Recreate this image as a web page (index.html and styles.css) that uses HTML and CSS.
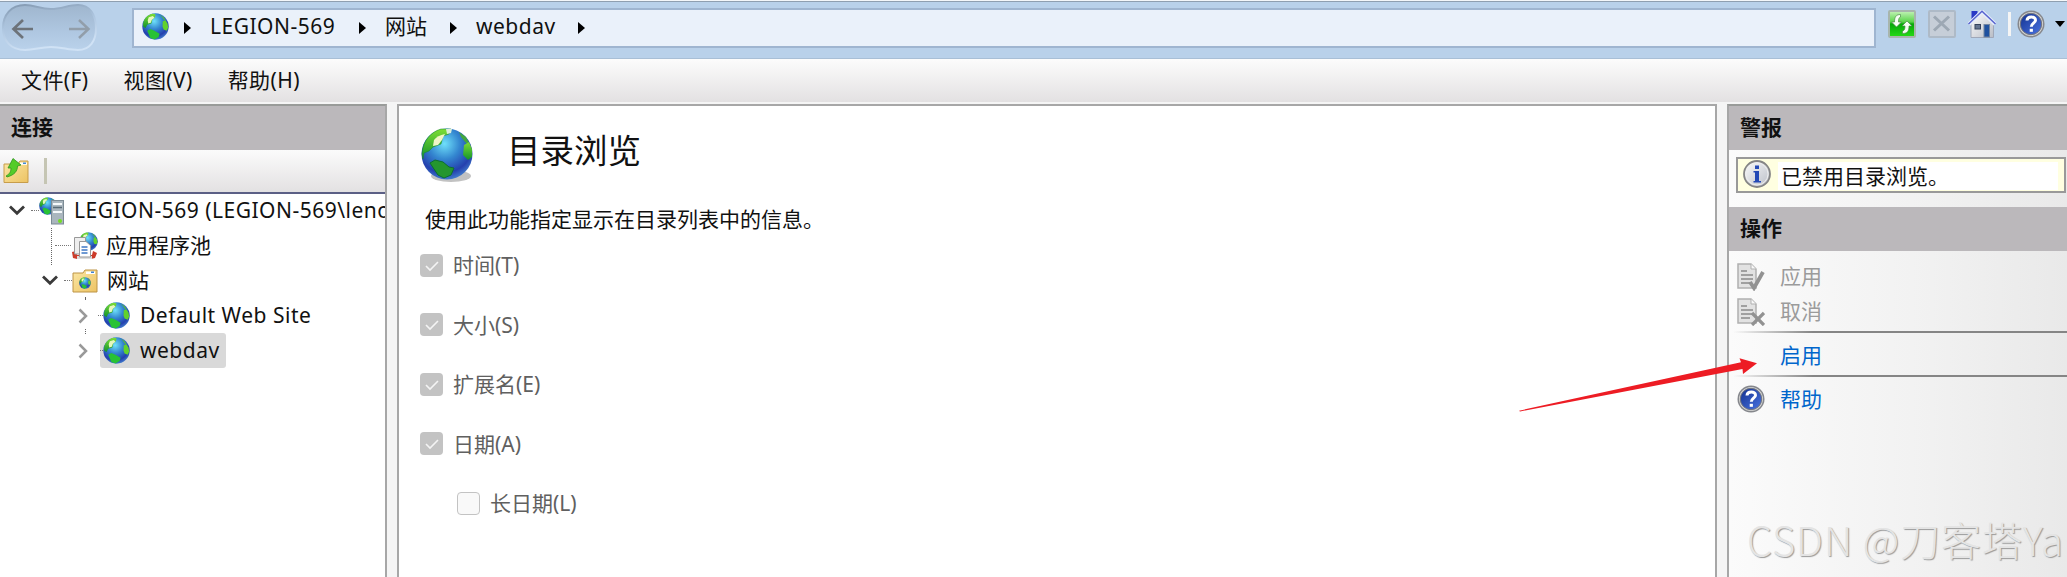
FILE: index.html
```html
<!doctype html>
<html lang="zh-CN">
<head>
<meta charset="utf-8">
<title>IIS 管理器</title>
	<link rel="stylesheet" href="styles.css">
</head>

<body>
	<!-- shared icons -->
	<svg class="defs" width="0" height="0">
		<defs>
			<radialGradient id="sea" cx="45%" cy="30%" r="75%">
				<stop offset="0" stop-color="#6fe0fa"/>
				<stop offset=".4" stop-color="#3487d0"/>
				<stop offset=".75" stop-color="#2440ae"/>
				<stop offset="1" stop-color="#4b8fd6"/>
			</radialGradient>
			<linearGradient id="land" x1="0" y1="0" x2="0" y2="1">
				<stop offset="0" stop-color="#7ddd35"/>
				<stop offset="1" stop-color="#12932c"/>
			</linearGradient>
			<linearGradient id="folder" x1="0" y1="0" x2="1" y2="1">
				<stop offset="0" stop-color="#fbe7a5"/>
				<stop offset="1" stop-color="#edc363"/>
			</linearGradient>
			<linearGradient id="green" x1="0" y1="0" x2="0" y2="1">
				<stop offset="0" stop-color="#c4f3b8"/>
				<stop offset=".42" stop-color="#5ad44a"/>
				<stop offset=".5" stop-color="#07a80a"/>
				<stop offset="1" stop-color="#25dc16"/>
			</linearGradient>
			<linearGradient id="steel" x1="0" y1="0" x2="1" y2="1">
				<stop offset="0" stop-color="#fdfdfd"/>
				<stop offset="1" stop-color="#b9bdc6"/>
			</linearGradient>
			<linearGradient id="blue" x1="0" y1="0" x2="1" y2="1">
				<stop offset="0" stop-color="#13318f"/>
				<stop offset="1" stop-color="#4a74e2"/>
			</linearGradient>
			<linearGradient id="pill" x1="0" y1="0" x2="0" y2="1">
				<stop offset="0" stop-color="#9fb6ce"/>
				<stop offset=".6" stop-color="#afc7e1"/>
				<stop offset="1" stop-color="#bad2eb"/>
			</linearGradient>
			<linearGradient id="rim" x1="0" y1="0" x2=".3" y2="1">
				<stop offset="0" stop-color="#8298b0"/>
				<stop offset=".5" stop-color="#aec6e0"/>
				<stop offset="1" stop-color="#d0e2f5"/>
			</linearGradient>
		</defs>
		<symbol id="globe" viewBox="0 0 26 26">
			<circle cx="13" cy="13" r="12.7" fill="url(#sea)"/>
			<path d="M1 12C1 6 5 2 10 .8l3 .3-.5 3-2.500 2-1 4-4 1.300-1.500 3-2-1z" fill="url(#land)"/>
			<path d="M6.500 4l4-1 1.500 1.500-2.500 2-1 3-2.500.5-.5-3z" fill="#e6f7bd"/>
			<path d="M17 1.500l4 2.500 2 3.500-2-1-1.500-2.500z" fill="#58bb3a"/>
			<path d="M20 8l2.500-1 2 3 .8 4-1.500 3-3-1-1-3z" fill="#62d22c"/>
			<path d="M5 17l3-1.500 4 1.500 5 3-1 3-4 2.500-4-1.500z" fill="#28c235"/>
		</symbol>
		<symbol id="help-icon" viewBox="0 0 28 28">
			<circle cx="14" cy="14" r="13.500" fill="#85878c"/>
			<circle cx="14" cy="14" r="12" fill="#d5d5d3"/>
			<circle cx="14" cy="14" r="10.700" fill="url(#blue)" stroke="#72757e"/>
			<path d="M10 10.500c.3-4.500 8.500-4.700 8.500-.3 0 3-4.200 3-4.200 6.600" fill="none" stroke="#fff" stroke-width="3"/>
			<rect x="12.700" y="18.800" width="3.200" height="3" fill="#fff"/>
		</symbol>
		<symbol id="sheet" viewBox="0 0 28 28">
			<path d="M1 1h13l5 5v19H1z" fill="#e2e2e2" stroke="#b0b0b0" stroke-width="1.500"/>
			<path d="M14 1v5h5" fill="#f8f8f8" stroke="#b0b0b0"/>
			<path d="M4 8h6M4 12h12M4 16h12M4 20h9" stroke="#8b8b8b" stroke-width="1.500"/>
		</symbol>
		<symbol id="tick" viewBox="0 0 23 23">
			<path d="M6 12l4 4 8-8" fill="none" stroke="#f4f4f4" stroke-width="1.600"/>
		</symbol>
		<symbol id="chev-down" viewBox="0 0 16 11">
			<path d="M1 1.500l7 6.800 7-6.800" fill="none" stroke="#3a3a3a" stroke-width="2.800"/>
		</symbol>
		<symbol id="chev-right" viewBox="0 0 10 16">
			<path d="M1.500 1.500L8 8l-6.500 6.500" fill="none" stroke="#999" stroke-width="2.500"/>
		</symbol>
	</svg>

	<div class="topbar">
		<svg class="nav" width="96" height="50" viewBox="0 0 96 50">
			<path d="M23 2C33 2 38 6 49 6S66 2 76 2c12 0 18 10 18 23s-6 22-18 22c-10 0-16-3-27-3s-16 3-26 3C9 47 1 38 1 25S9 2 23 2z" fill="url(#pill)" stroke="url(#rim)" stroke-width="2"/>
			<path d="M31 26H12M21 17l-9.500 9 9.500 9" fill="none" stroke="#6d737a" stroke-width="2.700"/>
			<path d="M67 26h19M77 17l9.500 9-9.500 9" fill="none" stroke="#929eaa" stroke-width="2.500"/>
		</svg>
		<div class="address">
			<svg class="globe" width="27" height="27"><use href="#globe"/></svg>
			<i class="arrow"></i>
			<span class="wide crumb-host">LEGION-569</span>
			<i class="arrow"></i>
			<span class="crumb-sites">网站</span>
			<i class="arrow"></i>
			<span class="wide crumb-site">webdav</span>
			<i class="arrow"></i>
		</div>
		<div class="tools">
			<svg width="28" height="28" viewBox="0 0 28 28">
				<rect x="1" y="1" width="26" height="26" rx="1" fill="url(#green)" stroke="#a7b5ac" stroke-width="2"/>
				<path d="M12.500 4.500C8 4.500 6.500 7 6.500 12H3.500l5 5 5-5H10.500c0-3 .5-4.500 2-5z" fill="#f6fff4" stroke="#4c8c48" stroke-width=".7"/>
				<path d="M14.500 23.500c5 0 6.500-2.500 6.500-7.500h3l-5-5-5 5h3c0 3-.5 4.500-2.500 5z" fill="#f6fff4" stroke="#4c8c48" stroke-width=".7"/>
			</svg>
			<svg width="28" height="28" viewBox="0 0 28 28">
				<rect x="1" y="1" width="26" height="26" rx="1" fill="#c6ced8" stroke="#aebac7" stroke-width="2"/>
				<path d="M6 6.500l15 14M21 6.500l-15 14" stroke="#9da8b4" stroke-width="3"/>
			</svg>
			<svg width="28" height="28" viewBox="0 0 28 28">
				<path d="M3.500 1h6v7l-6 4z" fill="#2938c5"/>
				<path d="M3 14L14 3l11.500 11v13.500H3z" fill="url(#steel)" stroke="#a0a8b9"/>
				<path d="M1 14L14 1.500 27 14" fill="none" stroke="#e5ecfb" stroke-width="4"/>
				<path d="M.5 14L14 1.300 27.500 14" fill="none" stroke="#5864cf" stroke-width="1.500"/>
				<rect x="7" y="14.500" width="5.500" height="4.500" fill="#64748f" stroke="#35425c"/>
				<rect x="16" y="14.500" width="5.500" height="12.500" fill="#1f519f" stroke="#73859f"/>
			</svg>
			<i class="divider"></i>
			<svg width="28" height="28"><use href="#help-icon"/></svg>
			<i class="caret"></i>
		</div>
	</div>

	<div class="menubar">
		<span>文件(F)</span>
		<span>视图(V)</span>
		<span>帮助(H)</span>
	</div>

	<div class="main">
		<div class="connections">
			<div class="panel-title">连接</div>
			<div class="toolbar">
				<svg width="26" height="26" viewBox="0 0 26 26">
					<path d="M1 6h14l2-3h8v21.500H1z" fill="url(#folder)" stroke="#c79d4b"/>
					<path d="M17 4.500h7v2.300h-7z" fill="#fff"/>
					<path d="M20 4.500h3v1.500h-3z" fill="#448bd7"/>
					<path d="M3 18c4-2 5-5 5-8H5l5-9.500 8 6.500-3.500 1c0 5-3 9-10.500 11z" fill="#55cc29" stroke="#309620" stroke-width=".8"/>
				</svg>
				<i class="divider"></i>
			</div>
			<div class="tree">
				<i class="line line-a"></i>
				<i class="line line-b"></i>
				<i class="line line-c"></i>
				<div class="node">
					<span class="twist"><svg width="16" height="11"><use href="#chev-down"/></svg></span>
					<i class="dots"></i>
					<svg class="icon" width="27" height="28" viewBox="0 0 27 28">
						<svg x="0" y="0" width="18" height="18"><use href="#globe"/></svg>
						<rect x="12.500" y="3.500" width="12" height="23.500" fill="#aab6be" stroke="#7c8b95"/>
						<path d="M14 7h9M14 15h9" stroke="#f5f8fa" stroke-width="2"/>
						<path d="M14 10.500h9" stroke="#596b76" stroke-width="1.500"/>
						<circle cx="21" cy="24" r="2" fill="#73df22"/>
					</svg>
					<span class="label wide">LEGION-569 (LEGION-569\lenovo)</span>
				</div>
				<div class="node level-1">
					<span class="twist"></span>
					<i class="dots"></i>
					<svg class="icon" width="27" height="28" viewBox="0 0 27 28">
						<svg x="8" y="0" width="19" height="19"><use href="#globe"/></svg>
						<path d="M1 20l4-1 1 4h15l1-4 4 2-2 5-4 1H6l-4-1z" fill="#cc3c2b"/>
						<path d="M6 24h15v3H6z" fill="#ddd"/>
						<path d="M3.500 5.500h11V22h-11z" fill="#eee" stroke="#999"/>
						<path d="M8.500 9.500H15l4.500 4V25h-11z" fill="#fff" stroke="#999"/>
						<path d="M10.500 15h6M10.500 18h6M10.500 21h6" stroke="#3f78c5" stroke-width="1.500"/>
					</svg>
					<span class="label">应用程序池</span>
				</div>
				<div class="node level-1">
					<span class="twist"><svg width="16" height="11"><use href="#chev-down"/></svg></span>
					<i class="dots"></i>
					<svg class="icon" width="27" height="28" viewBox="0 0 27 28">
						<path d="M1 6h10l2-3h12v22H1z" fill="url(#folder)" stroke="#bd9447"/>
						<path d="M14 4.500h9v2.500h-9z" fill="#fff"/>
						<path d="M19 4.500h3v1.500h-3z" fill="#3f83d1"/>
						<svg x="7" y="10" width="12" height="12"><use href="#globe"/></svg>
					</svg>
					<span class="label">网站</span>
				</div>
				<div class="node level-2">
					<span class="twist"><svg width="10" height="16"><use href="#chev-right"/></svg></span>
					<i class="dots"></i>
					<svg class="icon" width="27" height="27"><use href="#globe"/></svg>
					<span class="label wide">Default Web Site</span>
				</div>
				<div class="node level-2">
					<span class="twist"><svg width="10" height="16"><use href="#chev-right"/></svg></span>
					<div class="selected">
						<i class="dots"></i>
						<svg class="icon" width="27" height="27"><use href="#globe"/></svg>
						<span class="label wide">webdav</span>
					</div>
				</div>
			</div>
		</div>

		<div class="content">
			<div class="heading">
				<svg width="53" height="56" viewBox="0 0 53 56">
					<ellipse cx="30" cy="48" rx="20" ry="6" fill="#777" opacity=".45"/>
					<circle cx="26" cy="26" r="25.500" fill="url(#sea)"/>
					<path d="M1 26C2 12 10 4 20 1l10 0-2 5-6 2-2 8-8 3-4 4-5 2-1 6z" fill="url(#land)" stroke="#16862b" stroke-width=".5"/>
					<path d="M13 12c2-3 6-5 11-6l-3 6-4 5-5 1z" fill="#f0f5c7"/>
					<path d="M25 1h6l-1 4-4 1z" fill="#dceddc"/>
					<path d="M38 4l7 5 4 8-4-2-5-6z" fill="#43a63e"/>
					<path d="M43 17l5-3 3 7v8l-4 3-5-5z" fill="url(#land)"/>
					<path d="M9 35l5-3 8 2 6 5 5 1-3 7-7 3-6-3z" fill="#24962e" stroke="#0c6f30"/>
				</svg>
				<h1>目录浏览</h1>
			</div>
			<p class="desc">使用此功能指定显示在目录列表中的信息。</p>
			<div class="option"><span class="box checked"><svg width="23" height="23"><use href="#tick"/></svg></span>时间(T)</div>
			<div class="option"><span class="box checked"><svg width="23" height="23"><use href="#tick"/></svg></span>大小(S)</div>
			<div class="option"><span class="box checked"><svg width="23" height="23"><use href="#tick"/></svg></span>扩展名(E)</div>
			<div class="option"><span class="box checked"><svg width="23" height="23"><use href="#tick"/></svg></span>日期(A)</div>
			<div class="option sub"><span class="box"></span>长日期(L)</div>
		</div>

		<div class="actions">
			<div class="panel-title">警报</div>
			<div class="alert">
				<svg width="28" height="28" viewBox="0 0 28 28">
					<circle cx="14" cy="14" r="13" fill="url(#steel)" stroke="#858585" stroke-width="1.800"/>
					<circle cx="14" cy="14" r="11" fill="none" stroke="#eee"/>
					<path d="M12 5.500h4v3.500h-4zM10.500 11H16v10h2v1.500h-7.500V21H12v-8.500h-1.500z" fill="#2349b5"/>
				</svg>
				<span>已禁用目录浏览。</span>
			</div>
			<div class="panel-title second">操作</div>
			<div class="action disabled">
				<svg width="28" height="28" viewBox="0 0 28 28"><use href="#sheet"/><path d="M13 19l4 6L26 9" fill="none" stroke="#929292" stroke-width="3.800"/></svg>
				<span>应用</span>
			</div>
			<div class="action disabled">
				<svg width="28" height="28" viewBox="0 0 28 28"><use href="#sheet"/><path d="M15 15l12 12M27 15L15 27" fill="none" stroke="#929292" stroke-width="3.300"/></svg>
				<span>取消</span>
			</div>
			<div class="rule"></div>
			<div class="action enable"><span>启用</span></div>
			<div class="rule"></div>
			<div class="action help">
				<svg width="28" height="28"><use href="#help-icon"/></svg>
				<span>帮助</span>
			</div>
		</div>
	</div>

	<svg class="pointer" width="240" height="54" viewBox="0 0 240 54">
		<path d="M0 52.700L222 4.300 220.500.3 238 5.300 224 16 223.500 11 1 53.500z" fill="#ed1c24"/>
	</svg>
	<div class="watermark">CSDN @刀客塔Ya</div>
</body>
</html>
```

FILE: styles.css
```css
*{box-sizing: border-box;}
body{
	margin: 0;
	width: 2067px;
	height: 577px;
	overflow: hidden;
	position: relative;
	background-color: #f5f5f5;
	color: #111;
	font-family: "Noto Sans","Noto Sans CJK SC",sans-serif;
	font-size: 21px;
	line-height: 30px;
	white-space: nowrap;
}
svg{
	display: block;
	flex-shrink: 0;
}
i{
	display: block;
	flex-shrink: 0;
}
.defs{
	position: absolute;
}
.wide{
	letter-spacing: 0.5px;
}

/* top bar */
.topbar{
	height: 59px;
	display: flex;
	align-items: flex-start;
	background-color: #b9d1ea;
	border-top: 1px solid #f4f7fa;
	border-bottom: 1px solid #a9bfd6;
	box-shadow: inset 0 1px #8f9fb0;
}
.nav{
	margin: 2px 0 0 2px;
}
.address{
	width: 1744px;
	height: 40px;
	margin: 7px 0 0 34px;
	padding-left: 8px;
	display: flex;
	align-items: center;
	background-color: #eaf1fa;
	border: 2px solid #9fb5d0;
}
.globe{
	margin-top: -3px;
}
.arrow{
	width: 7px;
	height: 12px;
	margin-left: 15px;
	background-color: #000;
	clip-path: polygon(0 0,100% 50%,0 100%);
}
.address span{
	margin: -4px 0 0 19px;
}
.crumb-host{
	width: 134px;
}
.crumb-sites{
	width: 50px;
}
.crumb-site{
	width: 87px;
}
.tools{
	display: flex;
	align-items: center;
	gap: 12px;
	margin: 9px 0 0 12px;
}
.tools .divider{
	width: 3px;
	height: 24px;
	background-color: #f5f5f5;
}
.tools .divider + svg{
	margin-left: -6px;
}
.caret{
	width: 10px;
	height: 6px;
	margin-left: -2px;
	background-color: #000;
	clip-path: polygon(0 0,100% 0,50% 100%);
}

/* menu */
.menubar{
	height: 43px;
	padding: 6px 0 0 21px;
	display: flex;
	gap: 35px;
	letter-spacing: 0.4px;
	background-image: linear-gradient(#fcfcfc,#e3e1e2);
}

/* panels */
.main{
	display: flex;
	height: 475px;
	padding-top: 2px;
	background-color: #f5f5f5;
}
.panel-title{
	height: 44px;
	padding: 6px 0 0 11px;
	background-color: #bbb8bb;
	font-weight: bold;
}
.connections{
	width: 387px;
	border-top: 2px solid #999b99;
	border-right: 2px solid #a7a7a7;
	background-color: #fff;
}
.toolbar{
	height: 44px;
	padding: 8px 0 0 3px;
	display: flex;
	gap: 15px;
	border-bottom: 2px solid #5b5f85;
	background-image: linear-gradient(#fbfbfb,#e3e1e2);
}
.toolbar .divider{
	width: 3px;
	height: 26px;
	background-color: #c5c5b3;
}
.tree{
	position: relative;
	overflow: hidden;
	height: 380px;
	margin-top: -1px;
}
.node{
	height: 35px;
	padding-left: 9px;
	display: flex;
	align-items: center;
}
.level-1{
	padding-left: 42px;
}
.level-2{
	padding-left: 78px;
}
.twist{
	width: 22px;
	flex-shrink: 0;
}
.level-2 .twist{
	width: 20px;
}
.dots{
	width: 8px;
	border-top: 1px dotted #777;
}
.level-2 .dots{
	width: 5px;
}
.label{
	margin: -2px 0 0 8px;
}
.level-2 .label{
	margin-left: 10px;
}
.selected{
	width: 126px;
	height: 35px;
	margin-left: 2px;
	display: flex;
	align-items: center;
	background-color: #d9d9d9;
	border-radius: 3px;
}
.selected .dots{
	width: 3px;
}
.line{
	position: absolute;
	border-left: 1px dotted #666;
}
.line-a{
	left: 51px;
	top: 35px;
	height: 37px;
}
.line + .line-b{
	left: 85px;
	top: 104px;
	height: 2px;
}
.line-c{
	left: 85px;
	top: 136px;
	height: 5px;
}
.level-1 .twist:empty{
	width: 13px;
}
.level-1 .twist:empty + .dots{
	width: 16px;
}

/* feature page */
.content{
	width: 1320px;
	margin-left: 10px;
	padding: 22px 0 0 22px;
	background-color: #fff;
	border: 2px solid #a7a7a7;
	border-bottom: 0;
}
.heading{
	display: flex;
	height: 56px;
}
h1{
	margin: -2px 0 0 33px;
	font-size: 33.500px;
	font-weight: normal;
	line-height: 48px;
}
.desc{
	margin: 20px 0 16px 4px;
	line-height: 30px;
}
.option{
	height: 30px;
	margin: 0 0 29.500px -1px;
	display: flex;
	align-items: center;
	color: #606060;
}
.box{
	width: 23px;
	height: 23px;
	margin-right: 10px;
	background-color: #f9f9f9;
	border: 1.500px solid #c3c3c3;
	border-radius: 4px;
}
.checked{
	border: 0;
	background-color: #c3c3c3;
}
.sub{
	padding-left: 37px;
}

/* actions */
.actions{
	flex: 1;
	margin-left: 10px;
	border-top: 2px solid #999b99;
	border-left: 2px solid #a7a7a7;
	background-image: linear-gradient(90deg,#fbfbfb,#f1f1f1 60%,#e9e9e9);
}
.alert{
	width: 330px;
	height: 36px;
	margin: 7px 0 14px 7px;
	padding: 3px 6px 0 5px;
	display: flex;
	background-color: #ffffe1;
	border: 2px solid #999;
}
.alert svg{
	margin-top: -2px;
}
.alert span{
	flex: 1;
	height: 28px;
	margin-left: 7px;
	padding-left: 3px;
	line-height: 28px;
	background-color: #fff;
}
.second{
	margin-bottom: 8px;
}
.action{
	height: 35px;
	padding-left: 8px;
	display: flex;
	align-items: center;
	gap: 15px;
	color: #0066cc;
}
.action span{
	margin-top: -2px;
}
.disabled{
	color: #9b9b9b;
}
.disabled + .rule{
	margin-top: 2px;
}
.enable{
	height: 42px;
	padding-left: 51px;
}
.help{
	height: 44px;
}
.help span{
	margin-top: 0;
}
.enable span{
	margin-top: 2px;
}
.rule{
	height: 2px;
	margin-left: 4px;
	background-image: linear-gradient(90deg,transparent,#858585 80px);
}

/* overlays */
.pointer{
	position: absolute;
	left: 1519px;
	top: 358px;
}
.watermark{
	position: absolute;
	left: 1747px;
	top: 512px;
	font-family: "Noto Sans CJK SC",sans-serif;
	font-weight: 300;
	font-size: 40px;
	line-height: 54px;
	letter-spacing: 0.9px;
	color: #e4e4e4;
	text-shadow: 1px 1px 1px #999;
}
```
